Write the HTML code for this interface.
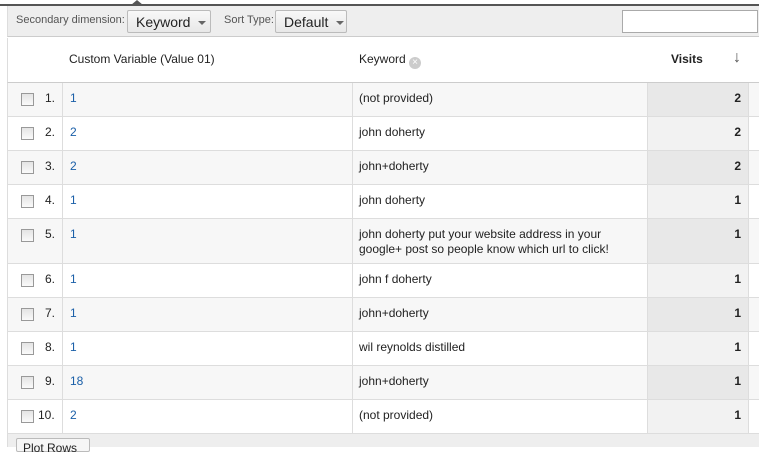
<!DOCTYPE html>
<html><head><style>
*{margin:0;padding:0;box-sizing:border-box}
body{width:759px;height:447px;overflow:hidden;background:#fff;font-family:"Liberation Sans",Arial,sans-serif;font-size:12px;color:#222;position:relative}
.topline{position:absolute;left:0;top:4px;width:759px;height:2px;background:#555}
.notch{position:absolute;left:131px;top:0;width:0;height:0;border-left:6px solid transparent;border-right:6px solid transparent;border-bottom:5px solid #555}
.tb{position:absolute;left:7px;top:6px;width:752px;height:31px;background:#eee;border-bottom:1px solid #ccc;border-left:1px solid #ddd}
.lbl{position:absolute;top:8px;font-size:11px;color:#555}
.btn{position:absolute;top:4px;height:23px;border:1px solid #bbb;border-radius:2px;background:linear-gradient(#f8f8f8,#e8e8e8);font-size:14px;color:#222;padding:3px 0 0 8px}
.btn i{display:inline-block;width:0;height:0;border-left:4px solid transparent;border-right:4px solid transparent;border-top:4px solid #666;margin-left:8px;vertical-align:2px}
.search{position:absolute;left:614px;top:4px;width:136px;height:23px;border:1px solid #aaa;background:#fff}
.row{position:absolute;left:7px;width:752px;border-bottom:1px solid #ddd;border-left:1px solid #ddd}
.c{position:absolute;top:0;bottom:0}
.vl{position:absolute;top:0;bottom:0;width:1px;background:#ddd}
.cb{position:absolute;left:13px;width:13px;height:13px;border:1px solid #999;background:linear-gradient(#e4e4e4,#fafafa)}
.blue{color:#1a5fa8}
</style></head><body>
<div class="topline"></div><div class="notch"></div>
<div class="tb">
<span class="lbl" style="left:8px">Secondary dimension:</span>
<div class="btn" style="left:119px;width:84px">Keyword<i></i></div>
<span class="lbl" style="left:216px">Sort Type:</span>
<div class="btn" style="left:267px;width:72px">Default<i></i></div>
<div class="search"></div>
</div>
<div class="row" style="top:38px;height:45px;background:#fff;border-bottom-color:#ccc">
<span style="position:absolute;left:61px;top:14px">Custom Variable (Value 01)</span>
<span style="position:absolute;left:351px;top:14px">Keyword <span style="display:inline-block;width:12px;height:12px;border-radius:50%;background:#ccc;color:#fff;font-size:10px;line-height:12px;text-align:center;vertical-align:-2px">×</span></span>
<span style="position:absolute;left:663px;top:14px;font-weight:bold">Visits</span>
<span style="position:absolute;left:725px;top:11px;font-size:16px;color:#555;font-weight:bold">↓</span>
</div>
<div id="rows"></div>
<div style="position:absolute;left:7px;top:434px;width:752px;height:13px;background:#eee;border-left:1px solid #ddd"></div>
<div style="position:absolute;left:16px;top:438px;width:74px;height:14px;border:1px solid #bbb;border-radius:2px;background:#f6f6f6;font-size:12px;padding:2px 0 0 6px">Plot Rows</div>
<script>
var d=[["1","(not provided)","2"],["2","john doherty","2"],["2","john+doherty","2"],["1","john doherty","1"],["1","john doherty put your website address in your<br>google+ post so people know which url to click!","1"],["1","john f doherty","1"],["1","john+doherty","1"],["1","wil reynolds distilled","1"],["18","john+doherty","1"],["2","(not provided)","1"]];
var tops=[83,117,151,185,219,264,298,332,366,400,434],h="";
for(var i=0;i<10;i++){var odd=i%2==0,t=tops[i],ht=tops[i+1]-t;
h+='<div class="row" style="top:'+t+'px;height:'+ht+'px;background:'+(odd?'#f7f7f7':'#fff')+'">'+
'<div class="c" style="left:639px;width:101px;background:'+(odd?'#e8e8e8':'#f2f2f2')+'"></div>'+
'<div class="vl" style="left:54px"></div><div class="vl" style="left:344px"></div><div class="vl" style="left:639px"></div><div class="vl" style="left:740px"></div>'+
'<div class="cb" style="top:10px"></div>'+
'<span style="position:absolute;left:'+(i==9?30:37)+'px;top:8px">'+(i+1)+'.</span>'+
'<span class="blue" style="position:absolute;left:62px;top:8px">'+d[i][0]+'</span>'+
'<span style="position:absolute;left:351px;top:8px;line-height:15px">'+d[i][1]+'</span>'+
'<span style="position:absolute;left:700px;width:33px;text-align:right;top:8px;font-weight:bold">'+d[i][2]+'</span></div>';}
document.getElementById('rows').innerHTML=h;
</script>
</body></html>
